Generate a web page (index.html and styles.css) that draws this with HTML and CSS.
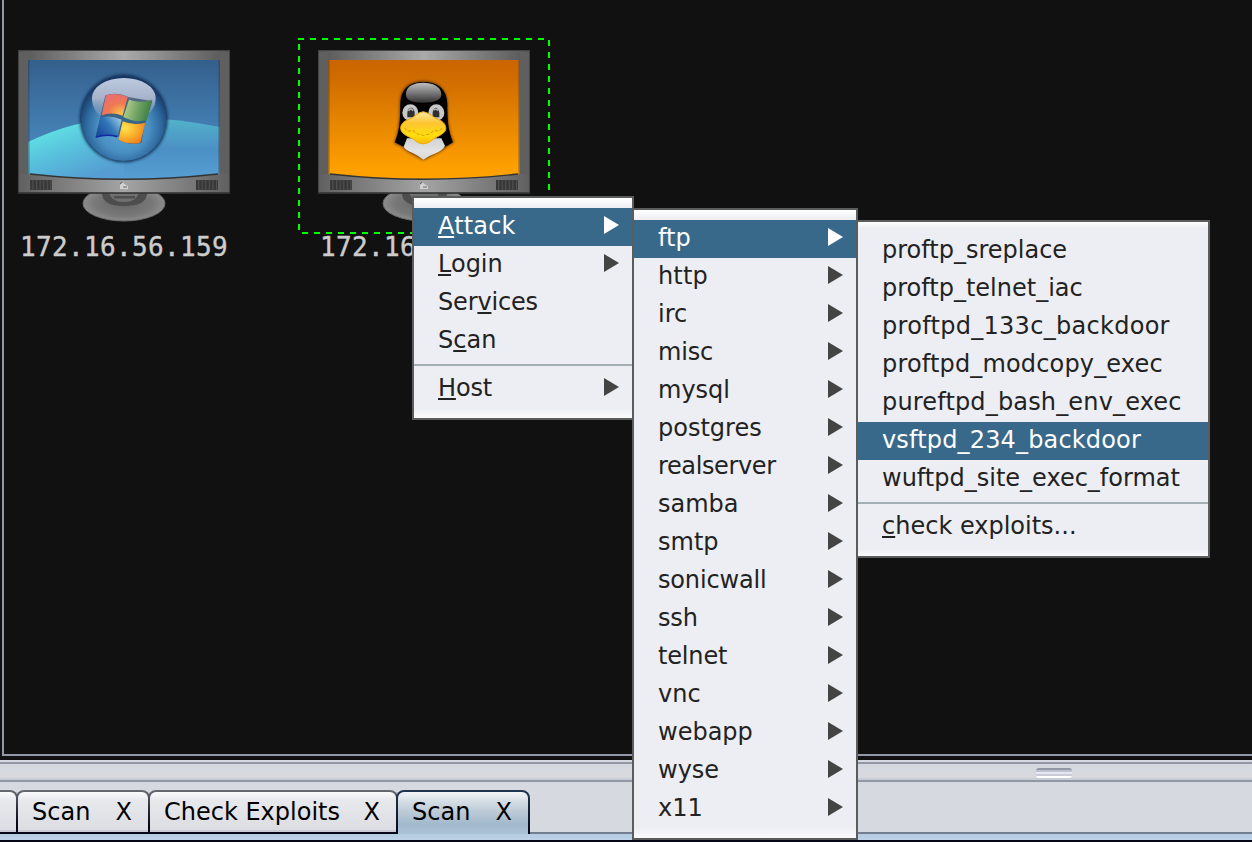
FILE: index.html
```html
<!DOCTYPE html>
<html lang="en">
<head>
<meta charset="utf-8">
<title>Targets</title>
<link rel="stylesheet" href="styles.css">
</head>
<body>
<svg class="defs" width="0" height="0" aria-hidden="true">
  <defs>
    <linearGradient id="frame" x1="0" x2="1" y1="0" y2="0"><stop offset="0" stop-color="#555"/><stop offset=".5" stop-color="#aaa"/><stop offset="1" stop-color="#555"/></linearGradient>
    <linearGradient id="chin" x1="0" x2="1" y1="0" y2="0"><stop offset="0" stop-color="#606060"/><stop offset=".5" stop-color="#a4a4a4"/><stop offset="1" stop-color="#606060"/></linearGradient>
    <linearGradient id="sky" x1="0" x2="0" y1="0" y2="1"><stop offset="0" stop-color="#345f8c"/><stop offset="1" stop-color="#4f96cf"/></linearGradient>
    <linearGradient id="hill" gradientUnits="userSpaceOnUse" x1="40" y1="72" x2="62" y2="131"><stop offset="0" stop-color="#62e4e4"/><stop offset=".45" stop-color="#58c2dd"/><stop offset="1" stop-color="#559dd2"/></linearGradient>
    <linearGradient id="hill2" x1="0" x2="0" y1="0" y2="1"><stop offset="0" stop-color="#52b6cc"/><stop offset=".5" stop-color="#4b90c4"/><stop offset="1" stop-color="#569fd4"/></linearGradient>
    <linearGradient id="amber" x1="0" x2="0" y1="0" y2="1"><stop offset="0" stop-color="#cb6500"/><stop offset=".15" stop-color="#cf6c00"/><stop offset=".9" stop-color="#ffa000"/><stop offset="1" stop-color="#ffa200"/></linearGradient>
    <radialGradient id="orb" cx=".5" cy=".6" r=".6"><stop offset="0" stop-color="#5eaedd"/><stop offset=".5" stop-color="#4a8fc2"/><stop offset=".74" stop-color="#2d679c"/><stop offset=".95" stop-color="#173765"/></radialGradient>
    <linearGradient id="gloss" x1="0" x2="0" y1="0" y2="1"><stop offset="0" stop-color="#bdcbe0"/><stop offset=".5" stop-color="#a6b3ca"/><stop offset="1" stop-color="#86a0bd" stop-opacity=".25"/></linearGradient>
    <radialGradient id="red" cx=".75" cy=".9" r=".9"><stop offset="0" stop-color="#fac447"/><stop offset=".55" stop-color="#f07852"/><stop offset="1" stop-color="#e96e70"/></radialGradient>
    <linearGradient id="green" x1="0" x2="1" y1=".6" y2=".8"><stop offset="0" stop-color="#b2ce8b"/><stop offset=".5" stop-color="#699f61"/><stop offset="1" stop-color="#347539"/></linearGradient>
    <linearGradient id="blue" x1="0" x2="1" y1=".7" y2=".1"><stop offset="0" stop-color="#1b4b9d"/><stop offset=".5" stop-color="#3277b8"/><stop offset="1" stop-color="#a2d0e8"/></linearGradient>
    <radialGradient id="gold" cx=".25" cy=".3" r=".85"><stop offset="0" stop-color="#ffe44f"/><stop offset=".5" stop-color="#fbb22c"/><stop offset="1" stop-color="#ee7a1b"/></radialGradient>
    <linearGradient id="cap" x1="0" x2="0" y1="0" y2="1"><stop offset="0" stop-color="#c0c0c0"/><stop offset="1" stop-color="#333"/></linearGradient>
    <linearGradient id="belly" x1="0" x2="0" y1="0" y2="1"><stop offset="0" stop-color="#d2d2d2"/><stop offset=".6" stop-color="#e3e3e3"/><stop offset="1" stop-color="#d7d7cf"/></linearGradient>
    <linearGradient id="beak" x1="0" x2="0" y1="0" y2="1"><stop offset="0" stop-color="#ffe9a5"/><stop offset=".35" stop-color="#fdc533"/><stop offset=".75" stop-color="#ffdf0a"/><stop offset="1" stop-color="#f6b40c"/></linearGradient>
    <radialGradient id="stand"><stop offset="0" stop-color="#666"/><stop offset=".7" stop-color="#787878"/><stop offset="1" stop-color="#8c8c8c"/></radialGradient>
    <filter id="soft" x="-20%" y="-20%" width="140%" height="140%"><feGaussianBlur stdDeviation="4"/></filter>
    <pattern id="vent" width="3.6" height="10" patternUnits="userSpaceOnUse"><rect width="3.6" height="10" fill="#383838"/><rect width="1.1" height="10" fill="#505050"/></pattern>
    <clipPath id="glass"><path d="M10 10H202V124Q106 134 10 124Z"/></clipPath>
    <clipPath id="ridge"><path d="M10 92Q58 69 106 68T202 77V131H10Z"/></clipPath>
    <g id="stand-shape">
      <ellipse cx="106" cy="153.5" rx="41" ry="17.5" fill="url(#stand)" stroke="#6a6a6a"/>
      <path d="M84 143Q84 156 106 156Q129 156 129 143Z" fill="#4d4d4d"/>
      <path d="M91 142Q93 152 106 152Q119 152 121 142Z" fill="#707070"/>
      <path d="M96 146H117V148.5H96Z" fill="#4f4f4f"/>
    </g>
    <g id="bezel">
      <rect x=".5" y=".5" width="211" height="142.5" fill="url(#frame)" stroke="#444"/>
      <path d="M1 2H10V142H1ZM202 2H211V142H202Z" fill="#5f5f5f"/>
      <rect x="1" y="124" width="210" height="18.5" fill="url(#chin)"/>
      <path d="M0 143H212" stroke="#343434" stroke-width="1.5"/>
      <path d="M12 130H34V140H12ZM178 130H200V140H178Z" fill="url(#vent)"/>
    </g>
    <g id="trim">
      <path d="M10.8 10V124M201.2 10V124" stroke="#333b45" stroke-opacity=".45" stroke-width="1.6"/>
      <path d="M12 124Q106 134.5 200 124" fill="none" stroke="#333" stroke-width="1.3"/>
      <path d="M102 139V135L105 132.5L107 134.5L110 136V139Z" fill="#d1d1d1"/><path d="M102 134L104 132M105 137H109" stroke="#666"/>
    </g>
  </defs>
</svg>

<main class="app">
  <section class="canvas">
    <figure class="host host-windows">
      <svg width="212" height="173" viewBox="0 0 212 173">
        <use href="#stand-shape"/><use href="#bezel"/>
        <g clip-path="url(#glass)">
          <rect x="10" y="10" width="192" height="121" fill="url(#sky)"/>
          <g clip-path="url(#ridge)">
            <rect x="90" y="66" width="112" height="65" fill="url(#hill2)"/>
            <rect x="10" y="66" width="96" height="65" fill="url(#hill)"/>
          </g>
        </g>
        <use href="#trim"/>
        <g transform="translate(52 15) scale(.33333)">
          <circle cx="161" cy="160" r="132" fill="#123158" filter="url(#soft)"/>
          <circle cx="161" cy="160" r="128" fill="url(#orb)"/>
          <path d="M66 98A95.500 59 0 0 1 257 98C257 130 240 150 207 161C160 138 120 175 90 151C74 140 66 121 66 98Z" fill="url(#gloss)"/>
          <path d="M106 91Q140 79 175 96L247 109L223 182L214 234Q177 242 144 224L149 216Q112 208 76 218L91 156Z" fill="#29445e" opacity=".65"/>
          <path d="M108 91Q140 81 173 96L158 152Q125 140 95 151Z" fill="url(#red)"/>
          <path d="M177 104Q210 116 246 105L230 166Q193 174 160 156Z" fill="url(#green)"/>
          <path d="M92 157Q122 149 155 164L142 215Q109 205 77 216Z" fill="url(#blue)"/>
          <path d="M78 216Q109 206 142 215" fill="none" stroke="#1029a6" stroke-width="5"/>
          <path d="M158 169Q190 183 226 173L211 233Q176 241 145 224Z" fill="url(#gold)"/>
        </g>
      </svg>
      <figcaption>172.16.56.159</figcaption>
    </figure>

    <svg class="selection" width="252" height="196" viewBox="0 0 252 196">
      <path d="M0 1H250M1 6V194M251 2V194M4 195H250" fill="none" stroke="#0f0" stroke-width="2" stroke-dasharray="6 6"/>
    </svg>
    <figure class="host host-linux">
      <svg width="212" height="173" viewBox="0 0 212 173">
        <use href="#stand-shape"/><use href="#bezel"/>
        <rect x="10" y="10" width="192" height="121" fill="url(#amber)" clip-path="url(#glass)"/>
        <use href="#trim"/>
        <g transform="translate(62 20) scale(.33333)">
          <path d="M60 100C61 55 87 34 130 34S201 57 202 101C202 139 203 181 221 217L202 228L184 242L130 270L82 244L64 228L43 219C56 188 60 153 60 100Z" fill="#5b2e00" filter="url(#soft)"/>
          <path d="M61 100C62 57 88 36 130 36S201 57 202 101C202 139 203 181 219 217L200 228L130 250L66 228L44 217C58 188 61 153 61 100Z"/>
          <path d="M78 72C78 47 104 38 130 38S184 49 184 72Q185 98 130 98T78 72Z" fill="url(#cap)"/>
          <path d="M81 205H184L195 227Q189 241 164 251Q144 258 130 269Q116 258 98 249Q76 240 71 230Z" fill="url(#belly)"/>
          <ellipse cx="91" cy="128" rx="24" ry="25" fill="#c8c8c8"/><ellipse cx="169" cy="128" rx="24" ry="25" fill="#c8c8c8"/>
          <path d="M82 128Q84 113 93 113T104 128V142H82ZM158 128Q160 113 167 113T178 128V142H158Z" fill="#303030"/>
          <path d="M86 123Q88 116 94 117L100 122M160 120Q167 114 174 121" fill="none" stroke="#b5b5b5" stroke-width="5"/>
          <path d="M130 125C148 128 162 145 178 150C196 158 201 173 195 184C183 199 163 201 148 217Q131 226 114 218C101 204 77 200 65 185C57 169 66 156 84 149C103 144 111 127 130 125Z" fill="url(#beak)" stroke="#f3aa10" stroke-width="3"/>
          <path d="M73 173L83 184L98 181L112 192L130 196L148 192L164 181L176 184L188 173" fill="none" stroke="#d99805" stroke-width="3" stroke-dasharray="10 5"/>
        </g>
      </svg>
      <figcaption>172.16</figcaption>
    </figure>
  </section>

  <div class="divider"><span class="grip"></span></div>
  <nav class="tabs">
    <div class="tab tab-cut"><div class="face"></div></div>
    <div class="tab tab-short"><div class="face"><span>Scan</span><span>X</span></div></div>
    <div class="tab tab-long"><div class="face"><span>Check Exploits</span><span>X</span></div></div>
    <div class="tab tab-short active"><div class="face"><span>Scan</span><span>X</span></div></div>
  </nav>
  <div class="panel-edge"></div>
</main>

<ul class="menu menu-host">
  <li class="on sub wide"><span><u>A</u>ttack</span></li>
  <li class="sub"><span><u>L</u>ogin</span></li>
  <li class="tight"><span>Ser<u>v</u>ices</span></li>
  <li><span>S<u>c</u>an</span></li>
  <li class="rule"></li>
  <li class="sub tight"><span><u>H</u>ost</span></li>
</ul>
<ul class="menu menu-service">
  <li class="on sub"><span>ftp</span></li>
  <li class="sub wide"><span>http</span></li>
  <li class="sub"><span>irc</span></li>
  <li class="sub tight"><span>misc</span></li>
  <li class="sub"><span>mysql</span></li>
  <li class="sub"><span>postgres</span></li>
  <li class="sub tighter"><span>realserver</span></li>
  <li class="sub"><span>samba</span></li>
  <li class="sub"><span>smtp</span></li>
  <li class="sub tight"><span>sonicwall</span></li>
  <li class="sub tight"><span>ssh</span></li>
  <li class="sub tight"><span>telnet</span></li>
  <li class="sub"><span>vnc</span></li>
  <li class="sub"><span>webapp</span></li>
  <li class="sub"><span>wyse</span></li>
  <li class="sub"><span>x11</span></li>
</ul>
<ul class="menu menu-exploit">
  <li><span>proftp_sreplace</span></li>
  <li><span>proftp_telnet_iac</span></li>
  <li class="wider"><span>proftpd_133c_backdoor</span></li>
  <li class="wide"><span>proftpd_modcopy_exec</span></li>
  <li class="wide"><span>pureftpd_bash_env_exec</span></li>
  <li class="on wide"><span>vsftpd_234_backdoor</span></li>
  <li><span>wuftpd_site_exec_format</span></li>
  <li class="rule"></li>
  <li><span><u>c</u>heck exploits...</span></li>
</ul>
</body>
</html>
```

FILE: styles.css
```css
* { box-sizing: border-box; }
body {
  margin: 0;
  width: 1252px;
  height: 842px;
  overflow: hidden;
  position: relative;
  background: #111;
  color: #222;
  font: 24px/38px "DejaVu Sans", sans-serif;
}
.defs { position: absolute; }
.app { display: flex; flex-direction: column; height: 842px; }
.canvas {
  position: relative;
  flex: none;
  height: 756px;
  margin: 0 0 4px 2px;
  border-left: 2px solid #9297a6;
  border-bottom: 2px solid #9297a6;
}
.host { position: absolute; top: 50px; width: 212px; margin: 0; }
.host svg { display: block; }
.host-windows { left: 14px; }
.host-linux { left: 314px; }
.selection { position: absolute; left: 294px; top: 38px; }
.host figcaption {
  margin-left: 2px;
  padding-top: 9px;
  color: #ccc;
  font: 26px/30px "DejaVu Sans Mono", monospace;
  letter-spacing: .35px;
  -webkit-text-stroke: .4px #ccc;
  white-space: nowrap;
}
.host-linux figcaption { width: 92px; overflow: hidden; }

.divider {
  flex: none;
  height: 22px;
  padding: 8px 0 0 1036px;
  border-bottom: 2px solid #9297a6;
  background: linear-gradient(#d6d9e2 2px, #9297a6 2px 4px, #d5d8e0 4px, #d7d9de 18px, #c9ccd5 18px);
}
.grip {
  display: block;
  width: 36px;
  height: 10px;
  border-radius: 3px;
  background: linear-gradient(#9297a6 2px, #bfc2cf 2px 4px, #e5e8f2 4px 6px, #c9ccd8 6px 8px, #fff 8px);
}
.tabs {
  display: flex;
  flex: none;
  height: 52px;
  padding-top: 8px;
  background: linear-gradient(#d6d9e0 50px, #737d91 50px);
}
.tab {
  height: 44px;
  margin-left: -2px;
  padding: 2px;
  border-radius: 8px 8px 0 0;
  background: linear-gradient(#696b72, #333543 35%, #050616 80%);
}
.tab-cut { width: 38px; margin-left: -20px; }
.tab-short { width: 134px; }
.tab-long { width: 250px; }
.face {
  display: flex;
  justify-content: space-between;
  height: 40px;
  padding: 1px 16px 0 14px;
  border-radius: 6px 6px 0 0;
  background: linear-gradient(#fbfbfc, #e8e9ed 8px, #dcdde2 38px, #c9ccd5 38px);
  color: #000;
}
.active { background: linear-gradient(#223750, #162439 40%, #050616); }
.tab.active { padding-bottom: 0; }
.active .face {
  height: 42px;
  background: linear-gradient(#f4f6f8, #d3dce4 10px, #bccad6 20px, #a2b9cd 32px, #adc3d7);
}
.panel-edge { flex: none; height: 8px; background: linear-gradient(#b5cbe2, #bdd2e6 6px, #050616 6px); }

.menu {
  position: absolute;
  margin: 0;
  padding: 10px 0;
  list-style: none;
  border: 2px solid #5b5c5c;
  background: linear-gradient(#fff, #edeef3 10px, #edeef3 calc(100% - 10px), #fbfbfd);
}
.menu-host { left: 412px; top: 196px; width: 222px; }
.menu-service { left: 632px; top: 208px; width: 226px; }
.menu-exploit { left: 856px; top: 220px; width: 354px; background: linear-gradient(#fff, #edeef3 6px, #edeef3 calc(100% - 6px), #fbfbfd); }
.menu li {
  display: flex;
  justify-content: space-between;
  height: 38px;
  padding: 0 13px 0 24px;
  line-height: 37px;
  white-space: nowrap;
}
.menu .wide { letter-spacing: .16px; }
.menu .wider { letter-spacing: .29px; }
.menu .tight { letter-spacing: -.16px; }
.menu .tighter { letter-spacing: -.38px; }
.menu li.on { background: #39698a; color: #fff; }
.menu li.sub::after {
  content: "";
  width: 15px;
  height: 18px;
  margin-top: 8px;
  background: #444;
  clip-path: polygon(0 0, 100% 50%, 0 100%);
}
.menu li.on::after { background: #fff; }
.menu li.rule { height: 10px; padding: 0; border: solid transparent; border-width: 4px 0; background: #a5adb5 content-box; }
u { text-decoration-thickness: 2px; text-underline-offset: 2px; text-decoration-skip-ink: none; }
```
